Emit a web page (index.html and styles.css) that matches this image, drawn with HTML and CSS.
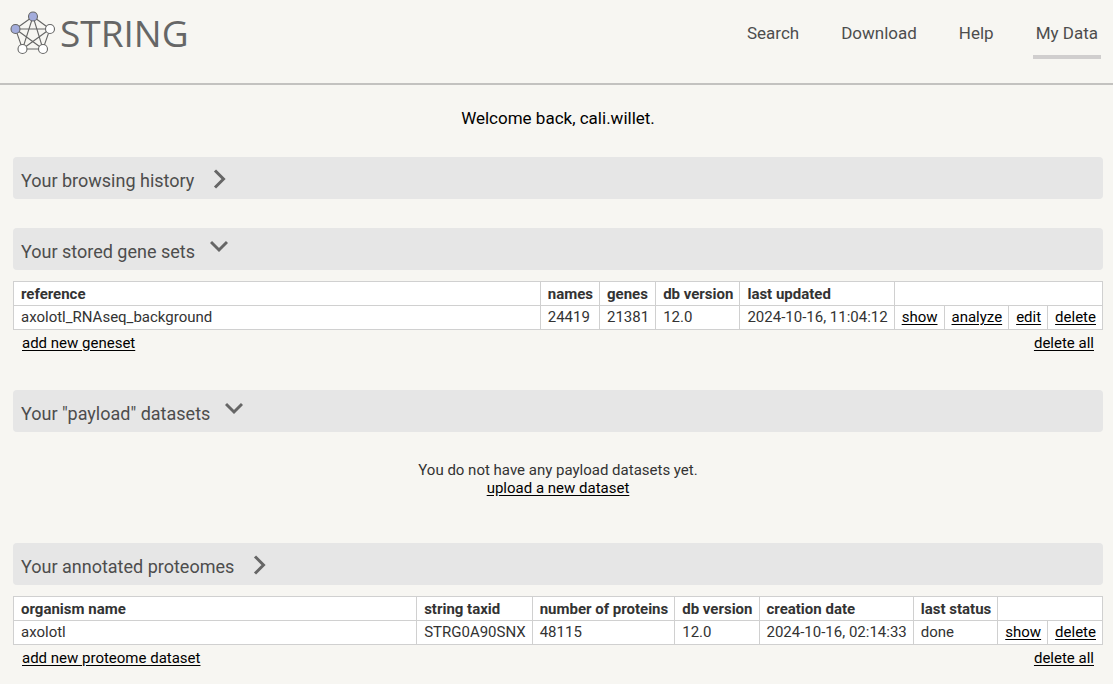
FILE: index.html
```html
<!DOCTYPE html>
<html lang="en">
<head>
<meta charset="utf-8">
<title>STRING: My Data</title>
<link rel="stylesheet" href="styles.css">
</head>
<body>
<header class="site-header">
  <a class="logo" href="#">
    <svg class="logo-mark" width="46" height="44" viewBox="0 0 46 44" aria-hidden="true">
      <path d="M23 5.500 5.500 18 12.500 38H33L40 18 23 5.500 12.500 38 40 18H5.500L33 38 23 5.500Z" fill="none" stroke="#666" stroke-width="1.100"/>
      <g stroke="#666" stroke-width="1.100">
        <circle cx="23" cy="5.500" r="4.500" fill="#a3acdc"/>
        <circle cx="5.500" cy="18" r="4.500" fill="#a3acdc"/>
        <circle cx="40" cy="18" r="4.500" fill="#fff"/>
        <circle cx="12.500" cy="38" r="4.500" fill="#fff"/>
        <circle cx="33" cy="38" r="4.500" fill="#fff"/>
      </g>
    </svg>
    <span class="logo-text">STRING</span>
  </a>
  <nav class="nav">
    <a href="#">Search</a>
    <a href="#">Download</a>
    <a href="#">Help</a>
    <a class="current" href="#" aria-current="page">My Data</a>
  </nav>
</header>
<main class="main">
  <p class="welcome">Welcome back, cali.willet.</p>

  <section class="section history">
    <h2 class="bar"><button type="button" aria-expanded="false">Your browsing history
      <svg class="chevron" width="18" height="20" viewBox="0 0 18 20" aria-hidden="true"><path d="M4 1.500 12.500 10 4 18.500"/></svg></button></h2>
  </section>

  <section class="section genesets">
    <h2 class="bar"><button type="button" aria-expanded="true">Your stored gene sets
      <svg class="chevron open" width="18" height="20" viewBox="0 0 18 20" aria-hidden="true"><path d="M1 4 9 12 17 4"/></svg></button></h2>
    <table class="data">
      <thead>
        <tr><th class="wide">reference</th><th>names</th><th>genes</th><th>db version</th><th>last updated</th><td colspan="4"></td></tr>
      </thead>
      <tbody>
        <tr><td>axolotl_RNAseq_background</td><td>24419</td><td>21381</td><td>12.0</td><td>2024-10-16, 11:04:12</td><td><a href="#">show</a></td><td><a href="#">analyze</a></td><td><a href="#">edit</a></td><td><a href="#">delete</a></td></tr>
      </tbody>
    </table>
    <div class="actions"><a href="#">add new geneset</a><a href="#">delete all</a></div>
  </section>

  <section class="section payload">
    <h2 class="bar"><button type="button" aria-expanded="true">Your "payload" datasets
      <svg class="chevron open" width="18" height="20" viewBox="0 0 18 20" aria-hidden="true"><path d="M1 4 9 12 17 4"/></svg></button></h2>
    <p class="empty">You do not have any payload datasets yet.<br><a href="#">upload a new dataset</a></p>
  </section>

  <section class="section proteomes">
    <h2 class="bar"><button type="button" aria-expanded="false">Your annotated proteomes
      <svg class="chevron" width="18" height="20" viewBox="0 0 18 20" aria-hidden="true"><path d="M4 1.500 12.500 10 4 18.500"/></svg></button></h2>
    <table class="data">
      <thead>
        <tr><th class="wide">organism name</th><th>string taxid</th><th>number of proteins</th><th>db version</th><th>creation date</th><th>last status</th><td colspan="2"></td></tr>
      </thead>
      <tbody>
        <tr><td>axolotl</td><td>STRG0A90SNX</td><td>48115</td><td>12.0</td><td>2024-10-16, 02:14:33</td><td>done</td><td><a href="#">show</a></td><td><a href="#">delete</a></td></tr>
      </tbody>
    </table>
    <div class="actions"><a href="#">add new proteome dataset</a><a href="#">delete all</a></div>
  </section>
</main>
</body>
</html>
```
FILE: styles.css
```css
* { box-sizing: border-box; }
body {
  margin: 0;
  background: #f7f6f2;
  color: #333;
  font-family: Roboto, sans-serif;
  font-size: 15px;
  line-height: 18px;
}
a { color: #000; text-underline-offset: 2px; }
.site-header {
  display: flex;
  justify-content: space-between;
  align-items: flex-start;
  height: 85px;
  padding: 11px 12px 0 10px;
  border-bottom: 2px solid #c3c2c0;
}
.logo { display: flex; align-items: center; gap: 4px; text-decoration: none; color: #666; }
.logo-text { font-family: "Open Sans", sans-serif; font-size: 37px; font-weight: 500; line-height: 44px; }
.nav { display: flex; gap: 36px; }
.nav a {
  padding: 12px 3px;
  border-bottom: 4px solid transparent;
  color: #4d4d4d;
  font-size: 17px;
  line-height: 20px;
  text-decoration: none;
}
.nav .current { border-color: #d0cece; }
.main { padding: 0 10px 16px 13px; }
.welcome { margin: 22px 0 28px; color: #000; font-size: 17px; line-height: 22px; text-align: center; }
.bar { margin: 0; background: #e6e6e6; border-radius: 4px; font-weight: 400; }
.bar button {
  display: flex;
  align-items: center;
  gap: 17px;
  width: 100%;
  height: 42px;
  padding: 5px 8px 0;
  border: 0;
  background: none;
  color: #4d4d4d;
  font: 18px/24px Roboto, sans-serif;
  text-align: left;
}
.bar button[aria-expanded="true"] { gap: 15px; }
.chevron { margin-bottom: 4px; fill: none; stroke: #666; stroke-width: 3; }
.chevron.open { margin-bottom: 8px; }
.history { margin-bottom: 29px; }
.genesets { margin-bottom: 38px; }
.payload { margin-bottom: 46px; }
.data {
  width: 100%;
  margin-top: 11px;
  border-collapse: collapse;
  background: #fff;
}
.data th, .data td {
  height: 24px;
  padding: 2px 6px 3px 7px;
  border: 1px solid #d0d0d0;
  text-align: left;
  white-space: nowrap;
}
.data th { padding-top: 3px; padding-bottom: 2px; }
.data .wide { width: 100%; }
.actions { display: flex; justify-content: space-between; padding: 4px 9px 0; }
.empty { margin: 29px 0 0; text-align: center; }
```
